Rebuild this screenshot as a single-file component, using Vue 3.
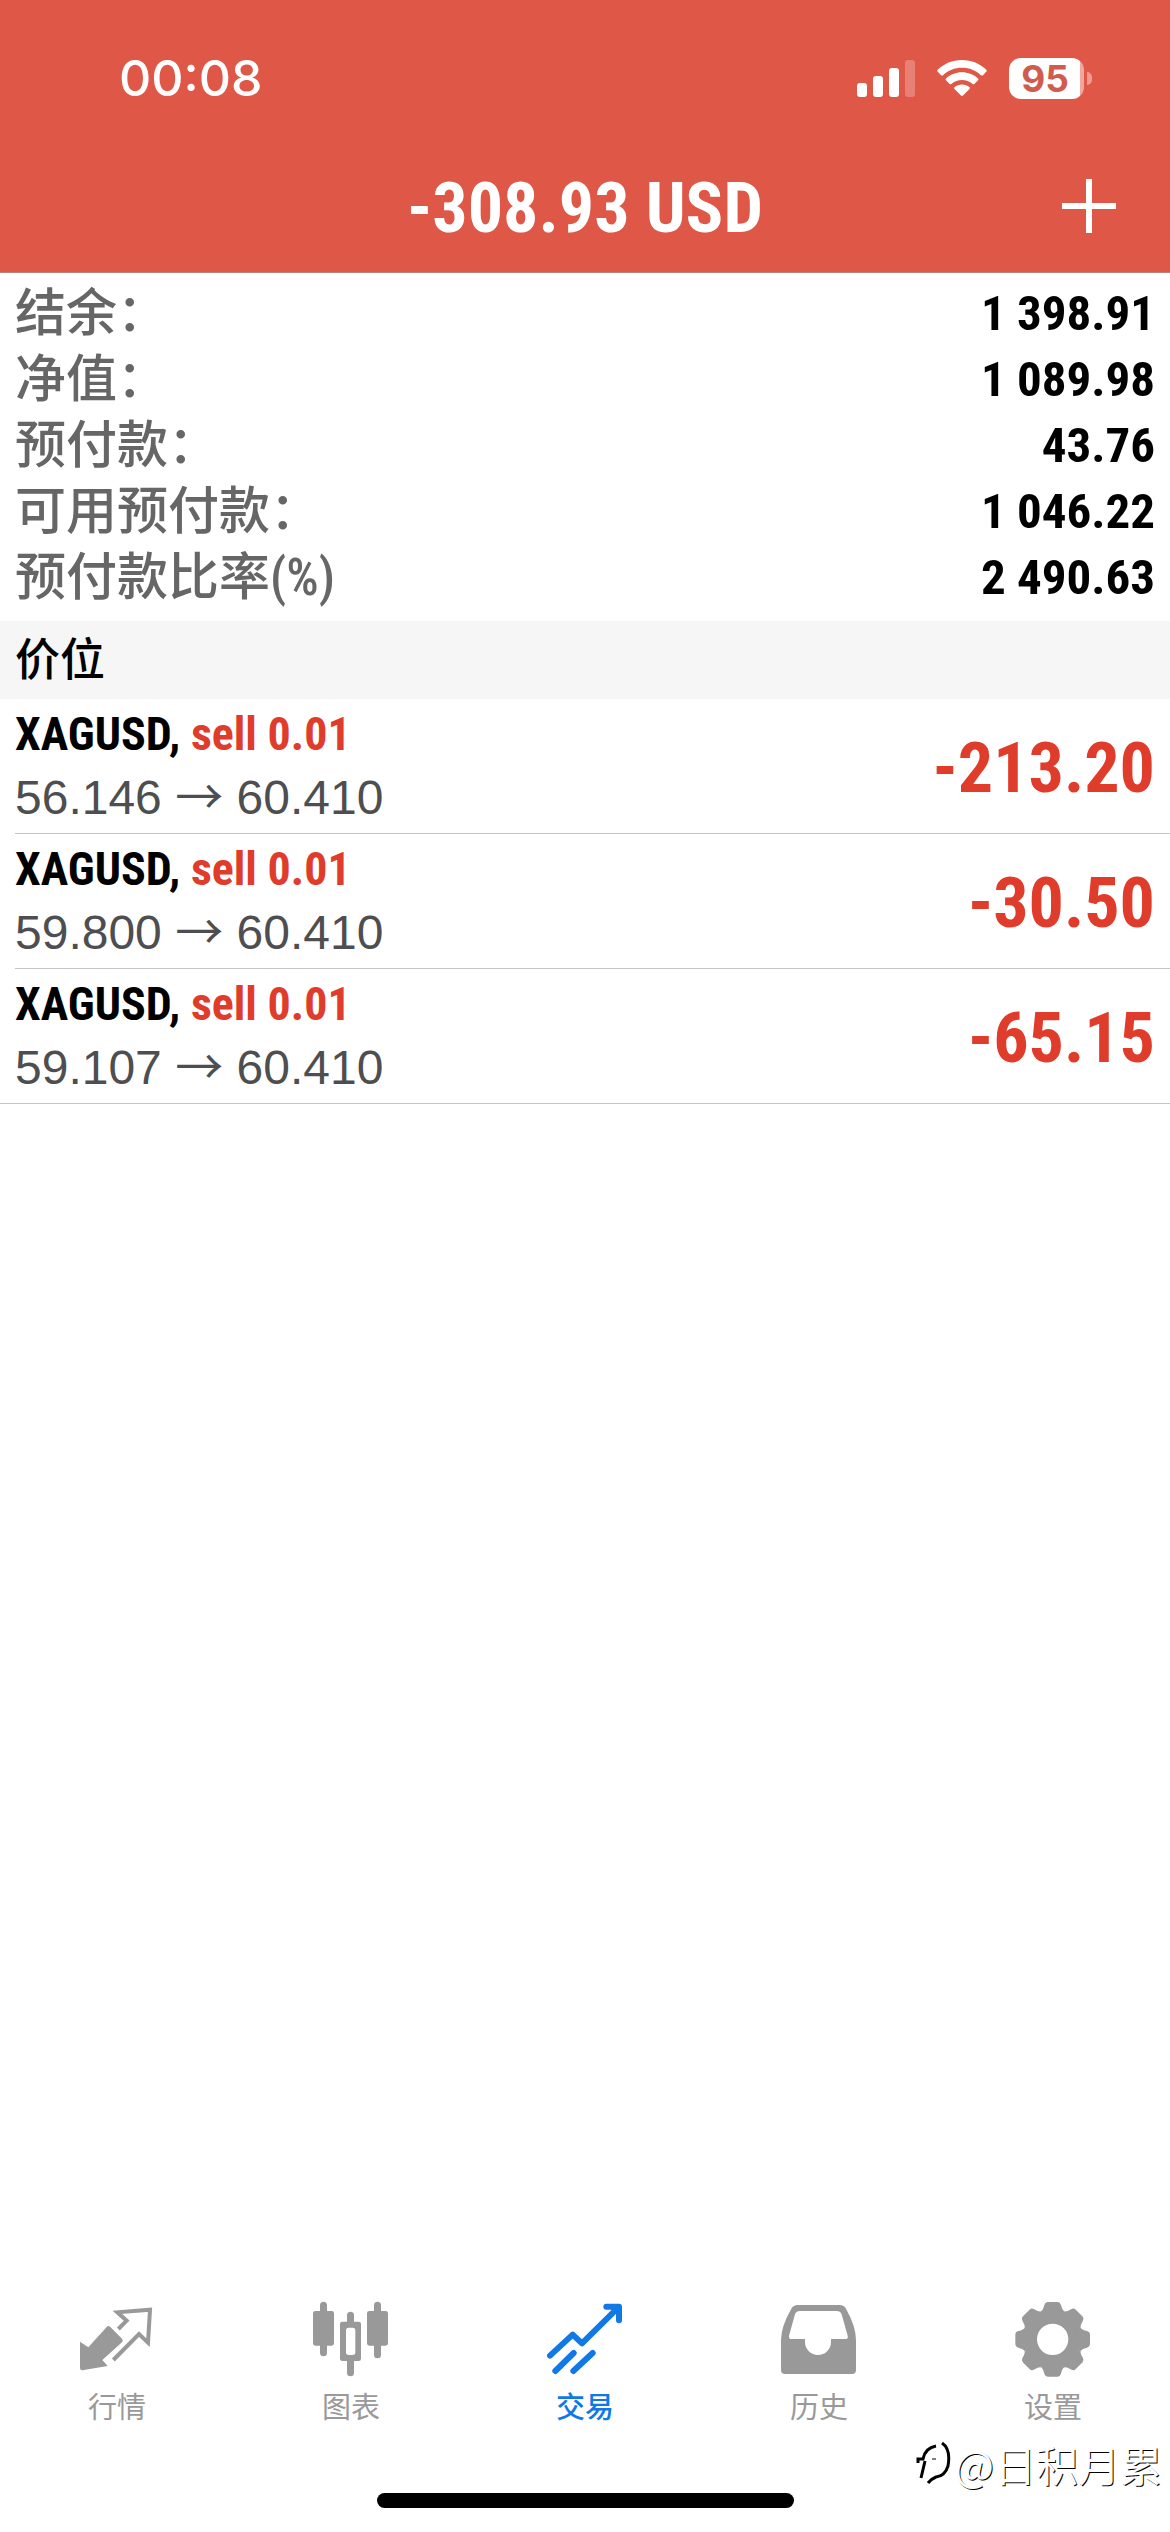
<script setup>
import { ref } from 'vue'

const summary = [
  { label: '结余：', value: '1 398.91' },
  { label: '净值：', value: '1 089.98' },
  { label: '预付款：', value: '43.76' },
  { label: '可用预付款：', value: '1 046.22' },
  { label: '预付款比率(%)', value: '2 490.63' },
]

const positions = [
  { id: 1, symbol: 'XAGUSD', side: 'sell 0.01', open: '56.146', current: '60.410', profit: '-213.20' },
  { id: 2, symbol: 'XAGUSD', side: 'sell 0.01', open: '59.800', current: '60.410', profit: '-30.50' },
  { id: 3, symbol: 'XAGUSD', side: 'sell 0.01', open: '59.107', current: '60.410', profit: '-65.15' },
]

const tabs = [
  { id: 'quotes', label: '行情' },
  { id: 'charts', label: '图表' },
  { id: 'trade', label: '交易' },
  { id: 'history', label: '历史' },
  { id: 'settings', label: '设置' },
]
const active = ref('trade')
const teeth = [0, 45, 90, 135, 180, 225, 270, 315]
</script>

<template>
  <div class="screen">
    <header class="top">
      <div class="status">
        <time class="clock">00:08</time>
        <div class="indicators">
          <svg class="signal" viewBox="0 0 58 38" aria-hidden="true">
            <rect x="0" y="24" width="10" height="14" rx="3" />
            <rect x="16" y="17" width="10" height="21" rx="3" />
            <rect x="32" y="9" width="10" height="29" rx="3" />
            <rect x="48" y="1" width="10" height="37" rx="3" opacity="0.25" />
          </svg>
          <svg class="wifi" viewBox="0 0 50 38" aria-hidden="true">
            <path d="M25 1C15.500 1 7 4.700.700 10.700c-.600.600-.600 1.300-.100 1.900l3.500 3.600c.500.500 1.300.500 1.900 0C11 11.300 17.700 8.700 25 8.700s14 2.600 19 7.500c.600.500 1.400.500 1.900 0l3.500-3.600c.500-.600.500-1.300-.100-1.900C43 4.700 34.500 1 25 1z" />
            <path d="M25 13.300c-6.100 0-11.700 2.300-16 6.100-.600.500-.600 1.300 0 1.900l3.600 3.600c.500.500 1.200.500 1.800.100 2.900-2.500 6.600-4 10.600-4s7.700 1.500 10.600 4c.600.400 1.300.400 1.800-.100l3.600-3.600c.600-.600.600-1.400 0-1.900-4.300-3.800-9.900-6.100-16-6.100z" />
            <path d="M25 25.500c-2.800 0-5.400 1-7.400 2.600-.600.500-.600 1.300-.100 1.900l6.500 6.600c.600.600 1.400.600 2 0l6.500-6.600c.500-.600.500-1.400-.100-1.900-2-1.600-4.600-2.600-7.400-2.600z" />
          </svg>
          <div class="battery"><span class="level">95</span></div>
        </div>
      </div>
      <div class="bar">
        <h1 class="total">-308.93 USD</h1>
        <button class="add" type="button" aria-label="新订单">
          <svg viewBox="0 0 54 54" aria-hidden="true"><path d="M27 0V54M0 27H54" /></svg>
        </button>
      </div>
    </header>

    <main class="content">
      <dl class="summary">
        <div v-for="row in summary" :key="row.label" class="line">
          <dt>{{ row.label }}</dt>
          <dd>{{ row.value }}</dd>
        </div>
      </dl>

      <h2 class="section">价位</h2>

      <ul class="positions">
        <li v-for="p in positions" :key="p.id" class="position">
          <div class="details">
            <p class="symbol">{{ p.symbol }}, <span class="side">{{ p.side }}</span></p>
            <p class="prices">{{ p.open }} <span class="arrow">→</span> {{ p.current }}</p>
          </div>
          <strong class="profit">{{ p.profit }}</strong>
        </li>
      </ul>
    </main>

    <nav class="tabs">
      <a
        v-for="tab in tabs"
        :key="tab.id"
        :href="'#' + tab.id"
        :class="['tab', { active: tab.id === active }]"
        @click.prevent="active = tab.id"
      >
        <svg class="icon" viewBox="0 0 228 228" aria-hidden="true">
          <g v-if="tab.id === 'quotes'">
            <path class="fill" d="M3 122L28 139L83 78Q88 72 94 78L129 113Q134 119 129 124L70 177L86 195L10 208Q3 208 3 201Z" />
            <path class="stroke thin" d="M118 84L143 59L115 34L213 26L207 125L180 99L103 177" />
          </g>
          <g v-else-if="tab.id === 'charts'">
            <path class="fill" d="M7 30H21V13a10 10 0 0 1 21 0V30H56q7 0 7 7V127q0 7-7 7H42V155a10 10 0 0 1-21 0V134H7q-7 0-7-7V37q0-7 7-7Z" />
            <path class="fill" fill-rule="evenodd" d="M88 62H102V43a10 10 0 0 1 21 0V62H137q7 0 7 7V173q0 7-7 7H123V215a10 10 0 0 1-21 0V180H88q-7 0-7-7V69q0-7 7-7ZM107 80q-8 0-8 8V154q0 8 8 8H119q8 0 8-8V88q0-8-8-8Z" />
            <path class="fill" d="M169 30H183V13a10 10 0 0 1 21 0V30H218q7 0 7 7V127q0 7-7 7H204V161a10 10 0 0 1-21 0V134H169q-7 0-7-7V37q0-7 7-7Z" />
          </g>
          <g v-else-if="tab.id === 'trade'">
            <path class="stroke" d="M9 164L77 101L105 127L214 19M178 17H216V58M25 210L80 156M79 210L137 156" />
          </g>
          <path
            v-else-if="tab.id === 'history'"
            class="fill"
            fill-rule="evenodd"
            d="M50 12H176Q189 12 195 23Q225 76 225 118V207Q225 219 213 219H12Q0 219 0 207V118Q0 76 31 23Q37 12 50 12ZM57 30Q46 30 42 40L24 104Q22 114 33 114H72V123A39 39 0 0 0 150 123V114H192Q203 114 200 104L182 40Q178 30 167 30Z"
          />
          <g v-else transform="translate(113 115)">
            <circle class="ring" r="67" />
            <path
              v-for="angle in teeth"
              :key="angle"
              class="fill"
              :transform="`rotate(${angle})`"
              d="M-35-84Q-29-87-25-103Q-22-112-15-112H15Q22-112 25-103Q29-87 35-84L28-68H-28Z"
            />
          </g>
        </svg>
        <span class="caption">{{ tab.label }}</span>
      </a>
    </nav>
    <div class="home"></div>

    <div class="watermark">
      <svg viewBox="0 0 36 46" aria-hidden="true">
        <path class="thick" d="M2 22V18H7Q9 7 20 5M9 20L5 37" />
        <path class="thick" d="M26 2Q35 8 32 25Q29 35 20 36Q15 38 12 42" />
        <path d="M16 18H20" />
      </svg>
      <span>@日积月累</span>
    </div>
  </div>
</template>

<style>
body {
  margin: 0;
  background: #fff;
}
</style>

<style scoped>
.screen {
  position: relative;
  display: flex;
  flex-direction: column;
  min-height: 100vh;
  background: #fff;
  color: #000;
  font-family: "Roboto Condensed", "Noto Sans CJK SC", sans-serif;
}

.top {
  background: #df5747;
  border-bottom: 1px solid #b98278;
  color: #fff;
}
.status {
  display: flex;
  align-items: center;
  justify-content: space-between;
  height: 156px;
  padding: 0 86px 0 119px;
}
.clock {
  font: 500 50px/60px Inter, sans-serif;
}
.indicators {
  display: flex;
  align-items: center;
  gap: 22px;
}
.signal {
  width: 58px;
  height: 38px;
  fill: #fff;
}
.wifi {
  width: 50px;
  height: 38px;
  fill: #fff;
}
.battery {
  position: relative;
  display: flex;
  width: 75px;
  height: 41px;
  border-radius: 12px;
  background: linear-gradient(90deg, #fff 71px, #f2a79e 71px);
}
.battery::after {
  content: "";
  position: absolute;
  top: 14px;
  right: -8px;
  width: 5px;
  height: 13px;
  border-radius: 0 6px 6px 0;
  background: #f09a90;
}
.level {
  width: 72px;
  color: #d15b4d;
  font: 700 37px/42px Inter, sans-serif;
  text-align: center;
}
.bar {
  display: grid;
  grid-template-columns: 1fr auto 1fr;
  align-items: center;
  height: 116px;
  padding: 0 54px;
}
.total {
  grid-column: 2;
  margin: 0 0 12px;
  font-size: 70px;
  line-height: 80px;
  font-weight: 700;
}
.add {
  justify-self: end;
  width: 54px;
  height: 54px;
  margin: 0 0 16px;
  padding: 0;
  border: 0;
  background: none;
}
.add svg {
  display: block;
  width: 54px;
  height: 54px;
  stroke: #fff;
  stroke-width: 6;
}

.content {
  flex: 1;
}
.summary {
  margin: 0;
  padding: 8px 15px 10px;
}
.line {
  display: flex;
  align-items: center;
  justify-content: space-between;
  height: 66px;
}
dt {
  color: #666;
  font-size: 51px;
  line-height: 60px;
  font-weight: 500;
}
dd {
  margin: 0;
  font-size: 49px;
  line-height: 60px;
  font-weight: 700;
}
.section {
  margin: 0;
  padding: 2px 15px 0;
  background: #f6f6f6;
  font-size: 45px;
  line-height: 76px;
  font-weight: 500;
}
.positions {
  margin: 0;
  padding: 0;
  list-style: none;
}
.position {
  display: flex;
  align-items: center;
  justify-content: space-between;
  margin-left: 15px;
  padding-right: 15px;
  border-bottom: 1px solid #c4c4c6;
}
.position:last-child {
  margin-left: 0;
  padding-left: 15px;
}
.details {
  padding: 3px 0;
}
p {
  margin: 0;
  line-height: 64px;
}
.symbol {
  font-size: 46px;
  font-weight: 700;
}
.side,
.profit {
  color: #e03c2c;
}
.prices {
  color: #4e4e50;
  font-family: "Liberation Sans", sans-serif;
  font-size: 48px;
}
.arrow {
  font-family: "Noto Sans CJK SC", sans-serif;
  line-height: 1;
}
.profit {
  margin-top: 4px;
  font-size: 70px;
  line-height: 80px;
}

.tabs {
  display: flex;
}
.tab {
  flex: 1;
  display: flex;
  flex-direction: column;
  align-items: center;
  gap: 14px;
  color: #999;
  text-decoration: none;
}
.tab.active {
  color: #1079e6;
}
.icon {
  width: 76px;
  height: 76px;
}
.fill {
  fill: currentColor;
}
.stroke {
  fill: none;
  stroke: currentColor;
  stroke-width: 18;
  stroke-linecap: round;
  stroke-linejoin: round;
}
.stroke.thin {
  stroke-width: 12;
  stroke-linecap: butt;
  stroke-linejoin: miter;
}
.ring {
  fill: none;
  stroke: currentColor;
  stroke-width: 40;
}
.caption {
  font-size: 29px;
  line-height: 34px;
}
.active .caption {
  font-weight: 500;
}
.home {
  align-self: center;
  width: 417px;
  height: 15px;
  margin: 68px 0 24px;
  border-radius: 8px;
  background: #000;
}

.watermark {
  position: absolute;
  right: 8px;
  bottom: 41px;
  display: flex;
  align-items: center;
  gap: 2px;
  color: #fff;
  font-family: "Noto Sans CJK SC", sans-serif;
  font-size: 42px;
  line-height: 54px;
  text-shadow: 1px 1px 0 #000;
}
.watermark svg {
  width: 36px;
  height: 46px;
  fill: none;
  stroke: #000;
  stroke-width: 1;
}
.watermark .thick {
  stroke-width: 3;
}
</style>
